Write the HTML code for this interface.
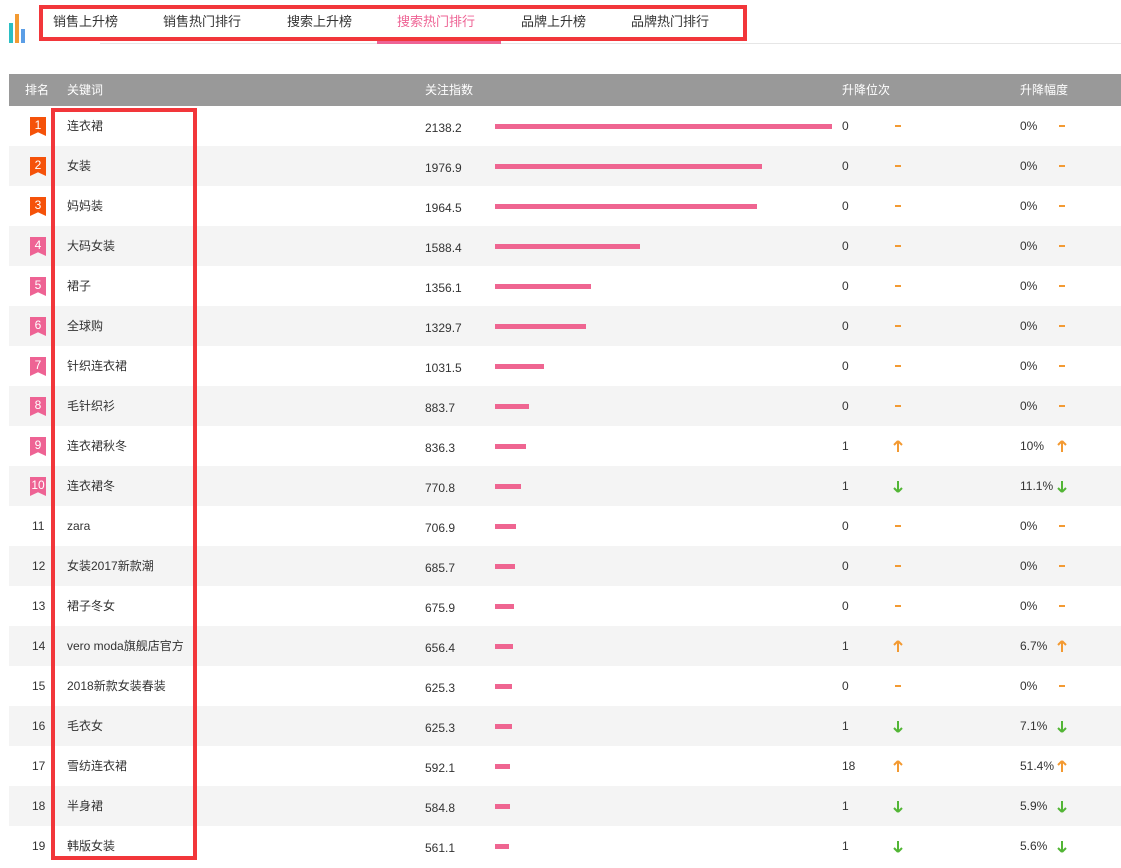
<!DOCTYPE html>
<html><head><meta charset="utf-8"><style>
*{margin:0;padding:0;box-sizing:border-box}
body{width:1121px;height:860px;overflow:hidden;background:#fff;font-family:"Liberation Sans","Noto Sans CJK SC",sans-serif;font-size:12px;color:#333;position:relative}
.abs{position:absolute}
.tab{position:absolute;top:12px;height:20px;line-height:20px;font-size:13px;color:#333;white-space:nowrap}
.row{position:absolute;left:9px;width:1112px;height:40px}
.row.g{background:#f4f4f4}
.c{position:absolute;top:0;height:40px;line-height:40px;white-space:nowrap}
.bar{position:absolute;left:486px;top:18px;height:5px;background:#ef6591}
.badge{position:absolute;left:21px;top:11px;width:16px;height:19px;color:#fff;font-size:12px;text-align:center;line-height:17px;clip-path:polygon(0 0,100% 0,100% 100%,50% 80%,0 100%)}
.o{background:#f5520a}.p{background:#ee6394}
.dash{position:absolute;top:19px;width:6px;height:2px;background:#f39a32}
.h{position:absolute;top:0;height:32px;line-height:32px}
</style></head><body>
<div class="abs" style="left:9px;top:23px;width:4px;height:20px;background:#2bbfc4"></div>
<div class="abs" style="left:15px;top:14px;width:4px;height:29px;background:#f39a32"></div>
<div class="abs" style="left:21px;top:29px;width:4px;height:14px;background:#5b9ee6"></div>
<div class="abs" style="left:100px;top:43px;width:1021px;height:1px;background:#e6e6e6"></div>
<div class="abs" style="left:377px;top:41px;width:124px;height:3px;background:#ee6394"></div>
<div class="tab" style="left:53px">销售上升榜</div>
<div class="tab" style="left:163px">销售热门排行</div>
<div class="tab" style="left:287px">搜索上升榜</div>
<div class="tab" style="left:397px;color:#ee6394">搜索热门排行</div>
<div class="tab" style="left:521px">品牌上升榜</div>
<div class="tab" style="left:631px">品牌热门排行</div>
<div class="abs" style="left:39px;top:5px;width:708px;height:36px;border:4px solid #f2363a"></div>
<div class="abs" style="left:9px;top:74px;width:1112px;height:32px;background:#999;color:#fff;font-size:12px">
<span class="h" style="left:16px">排名</span><span class="h" style="left:58px">关键词</span><span class="h" style="left:416px">关注指数</span><span class="h" style="left:833px">升降位次</span><span class="h" style="left:1011px">升降幅度</span></div>
<div id="rows"></div>
<div class="abs" style="left:51px;top:108px;width:146px;height:752px;border:4px solid #f2363a"></div>
<script>
var d=[["连衣裙","2138.2",337,"0","0%",0],["女装","1976.9",267,"0","0%",0],["妈妈装","1964.5",262,"0","0%",0],["大码女装","1588.4",145,"0","0%",0],["裙子","1356.1",96,"0","0%",0],["全球购","1329.7",91,"0","0%",0],["针织连衣裙","1031.5",49,"0","0%",0],["毛针织衫","883.7",34,"0","0%",0],["连衣裙秋冬","836.3",31,"1","10%",1],["连衣裙冬","770.8",26,"1","11.1%",-1],["zara","706.9",21,"0","0%",0],["女装2017新款潮","685.7",20,"0","0%",0],["裙子冬女","675.9",19,"0","0%",0],["vero moda旗舰店官方","656.4",18,"1","6.7%",1],["2018新款女装春装","625.3",17,"0","0%",0],["毛衣女","625.3",17,"1","7.1%",-1],["雪纺连衣裙","592.1",15,"18","51.4%",1],["半身裙","584.8",15,"1","5.9%",-1],["韩版女装","561.1",14,"1","5.6%",-1]];
function ar(x,t){if(t==0)return '<div class="dash" style="left:'+x+'px"></div>';
var c=t>0?'#f39a32':'#52b535';var p=t>0?'M5 1 L1 5 M5 1 L9 5 M5 1 L5 12':'M5 12 L1 8 M5 12 L9 8 M5 12 L5 1';
return '<svg class="abs" style="left:'+(x-2)+'px;top:14px" width="10" height="13"><path d="'+p+'" stroke="'+c+'" stroke-width="2" fill="none"/></svg>';}
var h='';d.forEach(function(r,i){var n=i+1;
h+='<div class="row'+(i%2?' g':'')+'" style="top:'+(106+i*40)+'px">';
h+=n<=10?'<div class="badge '+(n<=3?'o':'p')+'">'+n+'</div>':'<span class="c" style="left:'+(n<10?26:23)+'px">'+n+'</span>';
h+='<span class="c" style="left:58px">'+r[0]+'</span><span class="c" style="left:416px;top:2px">'+r[1]+'</span><div class="bar" style="width:'+r[2]+'px"></div><span class="c" style="left:833px">'+r[3]+'</span>'+ar(886,r[5])+'<span class="c" style="left:1011px">'+r[4]+'</span>'+ar(1050,r[5])+'</div>';});
document.getElementById('rows').innerHTML=h;
</script>
</body></html>
